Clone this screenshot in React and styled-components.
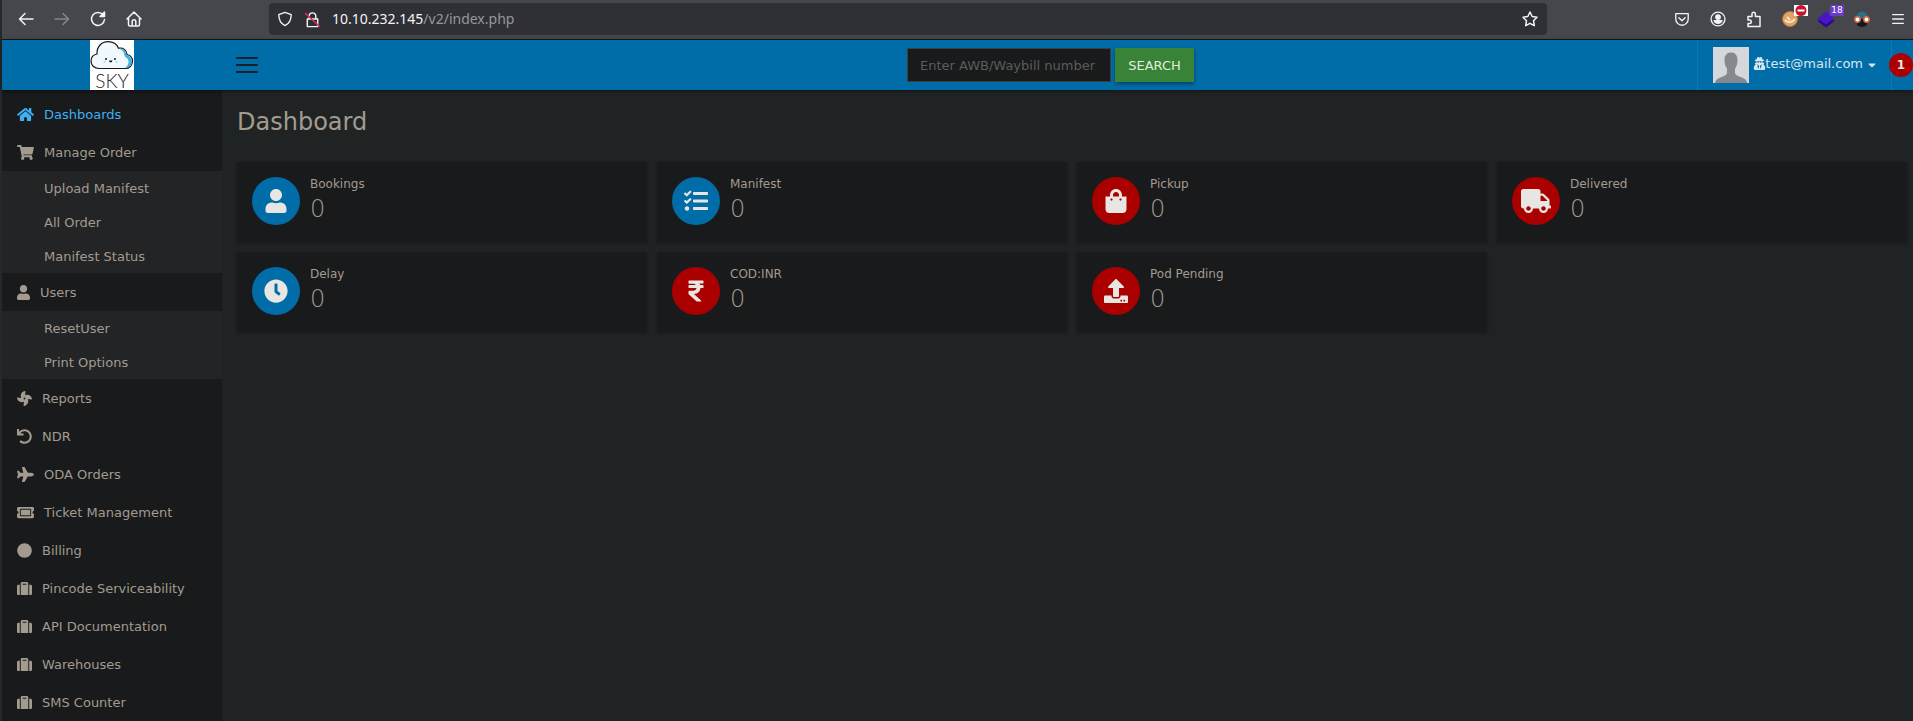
import React from "react";
import styled, { createGlobalStyle } from "styled-components";
import {
  FaHome, FaShoppingCart, FaUser, FaFan, FaUndo, FaPlane, FaTicketAlt, FaCircle,
  FaSuitcase, FaTasks, FaShoppingBag, FaTruck, FaClock, FaRupeeSign, FaUpload,
  FaUserSecret, FaCaretDown,
} from "react-icons/fa";

const GlobalStyle = createGlobalStyle`
  * { box-sizing: border-box; }
  body {
    margin: 0;
    background: #202324;
    color: #a39b90;
    font-family: "DejaVu Sans", sans-serif;
    font-size: 13px;
  }
  button, input { font: inherit; }
`;

const Window = styled.div`
  min-height: 100vh;
  display: flex;
  flex-direction: column;
  border-left: 2px solid #26282a;
`;

/* Browser toolbar */
const Toolbar = styled.div`
  height: 40px;
  flex: none;
  display: flex;
  align-items: center;
  background: #45474d;
  border-bottom: 1px solid #17181a;
  padding: 0 0 1px 6px;
`;
const ToolGroup = styled.div`
  display: flex;
`;
const ToolButton = styled.button`
  position: relative;
  width: 36px;
  height: 32px;
  padding: 0;
  border: 0;
  background: none;
  color: ${(p) => (p.$dim ? "#85878b" : "#f4f4f6")};
  display: flex;
  align-items: center;
  justify-content: center;
`;
const MainMenuButton = styled(ToolButton)`
  width: 33px;
  padding-left: 3px;
`;
const AddressBar = styled.form`
  flex: 1;
  height: 32px;
  margin: 0 117px;
  padding: 0 8px;
  border-radius: 4px;
  background: #2f3036;
  display: flex;
  align-items: center;
  gap: 11px;
  color: #f4f4f6;
`;
const Url = styled.div`
  flex: 1;
  font-family: "Noto Sans", sans-serif;
  font-size: 14px;
  line-height: 20px;
  color: #96979b;
  b { font-weight: 400; color: #f4f4f6; }
`;
const ExtBadge = styled.span`
  position: absolute;
  top: 2px;
  right: 0;
  width: 14px;
  height: 11px;
  font-size: 9px;
  line-height: 11px;
  text-align: center;
  color: #fff;
  background: ${(p) => p.$bg};
  display: flex;
  align-items: center;
  justify-content: center;
`;

const Line = ({ size = 18, w = 1.5, children }) => (
  <svg width={size} height={size} viewBox="0 0 18 18" fill="none" stroke="currentColor"
    strokeWidth={w} strokeLinecap="round" strokeLinejoin="round">{children}</svg>
);

/* Site header */
const Header = styled.header`
  height: 50px;
  flex: none;
  display: flex;
  background: #016da8;
  position: relative;
  box-shadow: 0 1px 4px rgba(0, 0, 0, 0.5);
`;
const Brand = styled.a`
  width: 220px;
  display: flex;
  justify-content: center;
  svg { overflow: visible; }
`;
const MenuButton = styled.button`
  width: 50px;
  padding: 0 14px;
  border: 0;
  background: none;
  display: flex;
  flex-direction: column;
  justify-content: center;
  gap: 5px;
  span { height: 2px; background: #16232b; }
`;
const HeaderSide = styled.div`
  flex: 1;
  display: flex;
  justify-content: ${(p) => (p.$end ? "flex-end" : "flex-start")};
`;
const Search = styled.form`
  display: flex;
  align-items: center;
  gap: 4px;
  margin-right: 34px;
`;
const SearchInput = styled.input`
  width: 204px;
  height: 34px;
  padding: 0 12px;
  border: 1px solid #3b3f41;
  background: #181a1b;
  color: #d0ccc6;
  &::placeholder { color: #5d5c59; opacity: 1; }
`;
const SearchButton = styled.button`
  width: 79px;
  height: 34px;
  padding: 0;
  border: 0;
  background: #388338;
  color: #e0eddc;
  box-shadow: 0 2px 4px rgba(0, 0, 0, 0.4);
`;
const Account = styled.button`
  display: flex;
  align-items: center;
  padding: 0 13px 0 15px;
  border: 0;
  border-left: 1px solid #0d7ab3;
  border-right: 1px solid #0d7ab3;
  background: none;
  color: #d9e6ee;
`;
const AccountName = styled.span`
  display: flex;
  align-items: center;
  margin: 0 3px 3px 4px;
  svg { margin-right: -1px; }
`;
const Alerts = styled.button`
  width: 24px;
  height: 24px;
  margin: 13px 0 0 -3px;
  padding: 0;
  border: 0;
  border-radius: 12px;
  background: #aa0000;
  color: #e8e6e3;
  font-size: 12px;
  font-weight: 700;
`;

/* Body */
const Body = styled.div`
  flex: 1;
  display: flex;
`;
const Sidebar = styled.nav`
  width: 220px;
  flex: none;
  padding-top: 5px;
  background: #181a1b;
`;
const List = styled.ul`
  list-style: none;
  margin: 0;
  padding: 0;
  background: ${(p) => (p.$sub ? "#222426" : "none")};
`;
const NavLink = styled.a`
  height: 38px;
  padding-left: 15px;
  display: flex;
  align-items: center;
  gap: 10px;
  color: ${(p) => (p.$active ? "#3fb0f2" : "#a39b90")};
  text-decoration: none;
  svg { width: ${(p) => p.$icon || 15}px; height: 15px; }
`;
const SubLink = styled(NavLink)`
  height: 34px;
  padding-left: 42px;
`;
const Main = styled.main`
  flex: 1;
  padding: 17px 6px 16px 15px;
`;
const Title = styled.h1`
  margin: 0 0 25px;
  font-size: 24px;
  line-height: 30px;
  font-weight: 400;
`;
const Cards = styled.div`
  display: grid;
  grid-template-columns: repeat(4, 1fr);
  gap: 10px;
`;
const Card = styled.section`
  height: 80px;
  padding: 15px;
  display: flex;
  gap: 10px;
  background: #181a1b;
  box-shadow: 0 1px 3px rgba(0, 0, 0, 0.3);
`;
const Disc = styled.div`
  width: 48px;
  height: 48px;
  border-radius: 50%;
  display: flex;
  align-items: center;
  justify-content: center;
  background: ${(p) => (p.$red ? "#aa0000" : "#016da8")};
  color: #e8e6e3;
  svg { width: 30px; height: 24px; }
`;
const Label = styled.h2`
  margin: 0;
  font-size: 12px;
  line-height: 14px;
  font-weight: 400;
`;
const Value = styled.p`
  margin: 3px 0 0;
  font-size: 24px;
  line-height: 30px;
  font-weight: 200;
`;

const NAV = [
  { label: "Dashboards", icon: FaHome, width: 17, active: true },
  { label: "Manage Order", icon: FaShoppingCart, width: 17, sub: ["Upload Manifest", "All Order", "Manifest Status"] },
  { label: "Users", icon: FaUser, width: 13, sub: ["ResetUser", "Print Options"] },
  { label: "Reports", icon: FaFan },
  { label: "NDR", icon: FaUndo },
  { label: "ODA Orders", icon: FaPlane, width: 17 },
  { label: "Ticket Management", icon: FaTicketAlt, width: 17 },
  { label: "Billing", icon: FaCircle },
  { label: "Pincode Serviceability", icon: FaSuitcase },
  { label: "API Documentation", icon: FaSuitcase },
  { label: "Warehouses", icon: FaSuitcase },
  { label: "SMS Counter", icon: FaSuitcase },
];

const STATS = [
  { label: "Bookings", icon: FaUser },
  { label: "Manifest", icon: FaTasks },
  { label: "Pickup", icon: FaShoppingBag, red: true },
  { label: "Delivered", icon: FaTruck, red: true },
  { label: "Delay", icon: FaClock },
  { label: "COD:INR", icon: FaRupeeSign, red: true },
  { label: "Pod Pending", icon: FaUpload, red: true },
];

const Logo = () => (
  <svg width="44" height="50" viewBox="0 0 44 50" role="img" aria-label="Sky">
    <rect width="44" height="50" fill="#fff" />
    <path d="M9 28.5C4 28.5 1 25 1 21c0-3.500 2.500-6.300 6-7C6.500 7 11.500 1.700 18 1.700c5 0 9 2.800 10.500 6.500 4.500-1 8.500 2 8.500 6.300 3.500.8 5.500 3.500 5.500 6.700 0 4.300-3 7.300-7.500 7.300z"
      fill="#eff9fe" />
    <path d="M29 8.700c4-.5 7.300 2 7.300 6.300 3.500.8 5.400 3.200 5.400 6.200 0 3.900-2.700 6.600-6.200 6.600 3-2.500 4-6.300 2-9.300-2.500-1.500-3-2.500-3.500-5-.7-2.600-2.500-4-5-4.800z" fill="#39b4e6" />
    <path d="M9 28.5C4 28.5 1 25 1 21c0-3.500 2.500-6.300 6-7C6.500 7 11.500 1.700 18 1.700c5 0 9 2.800 10.500 6.500 4.500-1 8.500 2 8.500 6.300 3.500.8 5.500 3.500 5.500 6.700 0 4.300-3 7.300-7.500 7.300z"
      fill="none" stroke="#15191c" strokeWidth="1.200" />
    <circle cx="16" cy="19" r="1" fill="#15191c" />
    <circle cx="25" cy="19" r="1" fill="#15191c" />
    <path d="M19 20.500h3.500q-.4 2-1.800 2t-1.700-2z" fill="#15191c" />
    <circle cx="14.500" cy="22" r="1" fill="#9bdcf5" />
    <circle cx="26.500" cy="22" r="1" fill="#9bdcf5" />
    <text x="22" y="48" textAnchor="middle" fontFamily="Lato, sans-serif" fontWeight="300" fontSize="19" fill="#26282a">SKY</text>
  </svg>
);

const Avatar = () => (
  <svg width="36" height="36" viewBox="0 0 36 36" aria-hidden="true">
    <rect width="36" height="36" fill="#d5d8da" />
    <path d="M11.500 13c0-5 2.500-7.500 6.500-7.500s6.500 2.500 6.500 7.500c0 4-1 6.500-2.500 8.500v4c0 3 4 3.800 7.500 5.200 2.700 1 4.200 2.800 4.700 5.300H2c.5-2.500 2-4.300 4.700-5.300 3.500-1.400 7.300-2.200 7.300-5.200v-4c-1.500-2-2.500-4.500-2.500-8.500z" fill="#85898d" />
  </svg>
);

export default function App() {
  return (
    <Window>
      <GlobalStyle />
      <Toolbar>
        <ToolGroup>
          <ToolButton aria-label="Back"><Line><path d="M16 9H3M8 3.500 2.500 9 8 14.500" /></Line></ToolButton>
          <ToolButton $dim aria-label="Forward"><Line><path d="M2 9h13M10 3.500 15.500 9 10 14.500" /></Line></ToolButton>
          <ToolButton aria-label="Reload"><Line><path d="M14.200 5A6.500 6.500 0 1 0 15.500 9.500" /><path d="M15.500 2v4.500H11z" fill="currentColor" /></Line></ToolButton>
          <ToolButton aria-label="Home"><Line><path d="M2 9 9 2 16 9M3.500 8v6.500q0 1.500 1.500 1.500h8q1.500 0 1.500-1.500V8M7.200 16v-4.500a1.800 1.800 0 0 1 3.600 0V16" /></Line></ToolButton>
        </ToolGroup>
        <AddressBar>
          <Line size={16}><path d="M9 1.500 16 4c0 6-1.500 10-7 12.500C3.500 14 2 10 2 4z" /></Line>
          <Line size={17}>
            <path d="M3.500 8.500h11v8h-11zM5.500 8.500v-3a3.500 3.500 0 0 1 7 0v3" />
            <path d="M1.500 2.500 16.500 16.500" stroke="#e22850" />
          </Line>
          <Url><b>10.10.232.145</b>/v2/index.php</Url>
          <Line><path d="m9 2 2.200 4.500 4.800.7-3.500 3.500.8 4.900L9 13.300l-4.300 2.300.8-4.900L2 7.200l4.800-.7z" /></Line>
        </AddressBar>
        <ToolGroup>
          <ToolButton aria-label="Pocket"><Line size={16}><path d="M2 3h14v6a7 7 0 0 1-14 0zM5.500 7.500 9 11l3.500-3.500" /></Line></ToolButton>
          <ToolButton aria-label="Account"><Line size={16}><circle cx="9" cy="9" r="7.800" /><circle cx="9" cy="6.800" r="2.500" fill="currentColor" /><path d="M4.500 11h9q-1.500 3-4.500 3t-4.500-3z" fill="currentColor" /></Line></ToolButton>
          <ToolButton aria-label="Extensions"><Line><path d="M3 6.500h4V4a1.700 1.700 0 0 1 3.400 0v2.500H15V16.500H3v-3h1.500a1.700 1.700 0 0 0 0-3.500H3z" /></Line></ToolButton>
          <ToolButton aria-label="Cookies">
            <svg width="18" height="18" viewBox="0 0 18 18"><circle cx="9" cy="9" r="7.500" fill="#e0a465" stroke="#b87936" /><path d="M4 10q5 5 10-1M6 7l3 3" stroke="#fbe3bd" strokeWidth="2" fill="none" /></svg>
            <ExtBadge $bg="#fff"><svg width="12" height="11" viewBox="0 0 12 11"><circle cx="6" cy="5.500" r="5.500" fill="#c41230" /><path d="M2.500 4.500h7v2h-7z" fill="#fff" /></svg></ExtBadge>
          </ToolButton>
          <ToolButton aria-label="Page tools, 18">
            <svg width="18" height="18" viewBox="0 0 18 18"><path d="M9 4 17.500 11 9 17.500.5 11z" fill="#2b0a8a" /><path d="M9 1.500 17.500 8.500 9 14.500.5 8.500z" fill="#4a16c4" /></svg>
            <ExtBadge $bg="#6a3bc9">18</ExtBadge>
          </ToolButton>
          <ToolButton aria-label="Disguise">
            <svg width="18" height="18" viewBox="0 0 18 18"><path d="M3 8a6 6.500 0 0 1 12 0z" fill="#2b7183" /><path d="M4 9h10v6q-5 4-10 0z" fill="#17181a" /><g fill="#fff" stroke="#d8664a" strokeWidth="1.500"><circle cx="4.500" cy="9.500" r="2.700" /><circle cx="13.500" cy="9.500" r="2.700" /></g></svg>
          </ToolButton>
          <MainMenuButton aria-label="Menu"><Line size={16}><path d="M3 4h12M3 9h12M3 14h12" /></Line></MainMenuButton>
        </ToolGroup>
      </Toolbar>

      <Header>
        <Brand href="#"><Logo /></Brand>
        <HeaderSide>
          <MenuButton aria-label="Toggle menu"><span /><span /><span /></MenuButton>
        </HeaderSide>
        <Search>
          <SearchInput aria-label="Waybill number" placeholder="Enter AWB/Waybill number" />
          <SearchButton type="button">SEARCH</SearchButton>
        </Search>
        <HeaderSide $end>
          <Account>
            <Avatar />
            <AccountName><FaUserSecret size={13} />test@mail.com</AccountName>
            <FaCaretDown size={12} />
          </Account>
          <Alerts aria-label="1 alert">1</Alerts>
        </HeaderSide>
      </Header>

      <Body>
        <Sidebar>
          <List>
            {NAV.map(({ label, icon: Icon, width, active, sub }) => (
              <li key={label}>
                <NavLink href="#" $active={active} $icon={width}><Icon />{label}</NavLink>
                {sub && (
                  <List $sub>
                    {sub.map((s) => <li key={s}><SubLink href="#">{s}</SubLink></li>)}
                  </List>
                )}
              </li>
            ))}
          </List>
        </Sidebar>
        <Main>
          <Title>Dashboard</Title>
          <Cards>
            {STATS.map(({ label, icon: Icon, red }) => (
              <Card key={label}>
                <Disc $red={red}><Icon /></Disc>
                <div>
                  <Label>{label}</Label>
                  <Value>0</Value>
                </div>
              </Card>
            ))}
          </Cards>
        </Main>
      </Body>
    </Window>
  );
}
